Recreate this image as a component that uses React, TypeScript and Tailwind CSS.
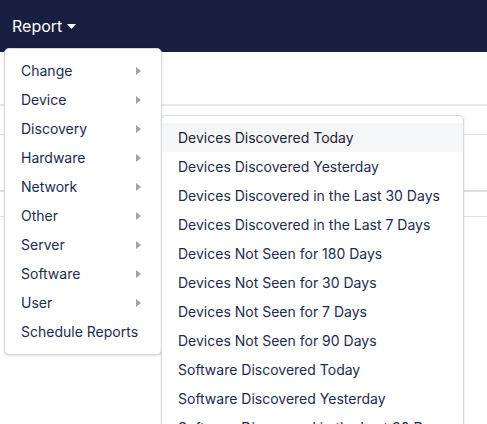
import React from "react";

const left = ["Change","Device","Discovery","Hardware","Network","Other","Server","Software","User"];
const right = ["Devices Discovered Today","Devices Discovered Yesterday","Devices Discovered in the Last 30 Days","Devices Discovered in the Last 7 Days","Devices Not Seen for 180 Days","Devices Not Seen for 30 Days","Devices Not Seen for 7 Days","Devices Not Seen for 90 Days","Software Discovered Today","Software Discovered Yesterday","Software Discovered in the Last 30 Days"];

function Tri() {
  return <svg width="5" height="8" viewBox="0 0 5 8"><path d="M0 0L5 4L0 8Z" fill="#9ca3af"/></svg>;
}

export default function App() {
  return (
    <div className="relative w-[487px] h-[424px] overflow-hidden bg-white text-[#1e2a4f]" style={{fontFamily: "Inter, 'Noto Sans', sans-serif"}}>
      <div className="h-[52px] bg-[#181e40] flex items-center px-3">
        <span className="text-white text-[16px]">Report</span>
        <svg className="ml-[5px]" width="9" height="5" viewBox="0 0 9 5"><path d="M0 0H9L4.5 5Z" fill="#fff"/></svg>
      </div>
      <div className="h-[54px] border-b-2 border-[#e5e7eb]"></div>
      <div className="h-[29px] border-b border-[#dcdfe3]"></div>
      <div className="h-[57px] border-b-2 border-[#dcdfe3]"></div>
      <div className="h-[25px] border-b border-[#dcdfe3]"></div>

      <div className="absolute left-[4px] top-[48px] w-[158px] bg-white border border-[#d6d9de] rounded-[5px] pt-[7px] pb-[8px] shadow-sm">
        {left.map(l => (
          <div key={l} className="h-[29px] flex items-center justify-between pl-[16px] pr-[20px] text-[14px]">
            <span>{l}</span><Tri />
          </div>
        ))}
        <div className="h-[29px] flex items-center pl-[16px] text-[14px]">Schedule Reports</div>
      </div>

      <div className="absolute left-[161px] top-[115px] w-[303px] bg-white border border-[#d6d9de] rounded-[5px] pt-[7px] shadow-sm">
        {right.map((r, i) => (
          <div key={r} className={"h-[29px] flex items-center pl-[16px] text-[14px] whitespace-nowrap " + (i === 0 ? "bg-[#f5f6f8] text-[#1f2230]" : "")}>{r}</div>
        ))}
      </div>
    </div>
  );
}
